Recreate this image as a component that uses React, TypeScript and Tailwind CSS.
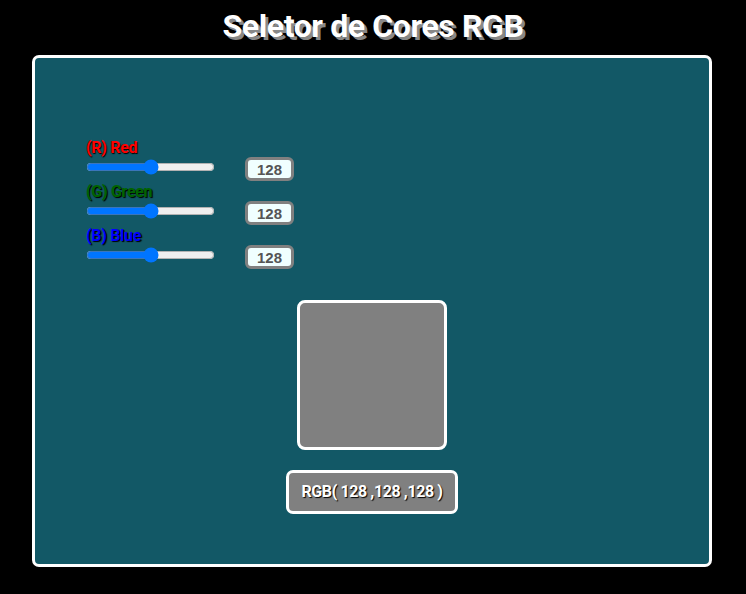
import { useState } from 'react'

type Channel = { key: 'r' | 'g' | 'b'; label: string; color: string }

const channels: Channel[] = [
  { key: 'r', label: '(R) Red', color: 'text-[#ff0000]' },
  { key: 'g', label: '(G) Green', color: 'text-[#006400]' },
  { key: 'b', label: '(B) Blue', color: 'text-[#0000ff]' },
]

export default function App() {
  const [rgb, setRgb] = useState({ r: 128, g: 128, b: 128 })

  const color = `rgb(${rgb.r}, ${rgb.g}, ${rgb.b})`

  return (
    <div className="min-h-screen bg-black pt-[6px] font-['Roboto',sans-serif]">
      <h1 className="text-center text-[32px] leading-[40px] font-bold tracking-[-0.4px] text-white [text-shadow:3px_3px_0_#888]">
        Seletor de Cores RGB
      </h1>
      <div className="mt-[9px] ml-[32px] h-[512px] w-[680px] rounded-[7px] border-[3px] border-white bg-[#125866] pt-[79px]">
        <div className="ml-[51px] flex flex-col gap-[6px]">
          {channels.map((c) => (
            <div key={c.key} className="flex items-end">
              <div className="flex flex-col">
                <label
                  className={`text-[16px] leading-[22px] font-bold tracking-[-0.3px] ${c.color} [text-shadow:1px_1px_1px_#000]`}
                >
                  {c.label}
                </label>
                <input
                  type="range"
                  min={0}
                  max={255}
                  value={rgb[c.key]}
                  onChange={(e) => setRgb({ ...rgb, [c.key]: Number(e.target.value) })}
                  className="w-[129px]"
                />
              </div>
              <input
                type="text"
                readOnly
                value={rgb[c.key]}
                className="mb-[-6px] ml-[30px] h-[24px] w-[49px] rounded-[6px] border-[3px] border-[#808080] bg-[#f0ffff] text-center font-['Liberation_Sans',sans-serif] text-[15px] font-bold text-[#555] outline-none"
              />
            </div>
          ))}
        </div>
        <div className="mt-[37px] flex flex-col items-center">
          <div
            className="h-[150px] w-[150px] rounded-[8px] border-[3px] border-white"
            style={{ backgroundColor: color }}
          />
          <div
            className="mt-[20px] flex h-[44px] w-[172px] items-center justify-center rounded-[7px] border-[3px] border-white text-[16px] font-bold tracking-[-0.4px] text-white [text-shadow:1px_1px_1px_#000]"
            style={{ backgroundColor: color }}
          >
            RGB( {rgb.r} ,{rgb.g} ,{rgb.b} )
          </div>
        </div>
      </div>
    </div>
  )
}
